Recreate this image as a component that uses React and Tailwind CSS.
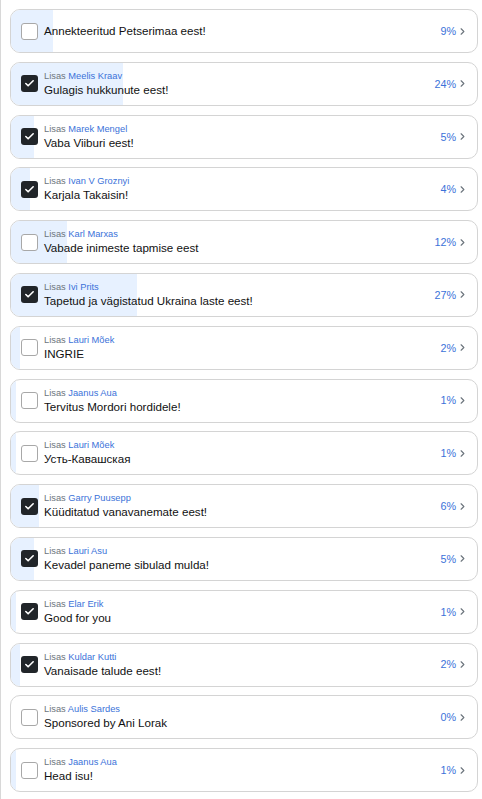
import { ChevronRight, Check } from "lucide-react";

const ITEMS = [
  { title: "Annekteeritud Petserimaa eest!", pct: 9, checked: false },
  { by: "Meelis Kraav", title: "Gulagis hukkunute eest!", pct: 24, checked: true },
  { by: "Marek Mengel", title: "Vaba Viiburi eest!", pct: 5, checked: true },
  { by: "Ivan V Groznyi", title: "Karjala Takaisin!", pct: 4, checked: true },
  { by: "Karl Marxas", title: "Vabade inimeste tapmise eest", pct: 12, checked: false },
  { by: "Ivi Prits", title: "Tapetud ja vägistatud Ukraina laste eest!", pct: 27, checked: true },
  { by: "Lauri Mõek", title: "INGRIE", pct: 2, checked: false },
  { by: "Jaanus Aua", title: "Tervitus Mordori hordidele!", pct: 1, checked: false },
  { by: "Lauri Mõek", title: "Усть-Кавашская", pct: 1, checked: false },
  { by: "Garry Puusepp", title: "Küüditatud vanavanemate eest!", pct: 6, checked: true },
  { by: "Lauri Asu", title: "Kevadel paneme sibulad mulda!", pct: 5, checked: true },
  { by: "Elar Erik", title: "Good for you", pct: 1, checked: true },
  { by: "Kuldar Kutti", title: "Vanaisade talude eest!", pct: 2, checked: true },
  { by: "Aulis Sardes", title: "Sponsored by Ani Lorak", pct: 0, checked: false },
  { by: "Jaanus Aua", title: "Head isu!", pct: 1, checked: false },
];

function Row({ item }) {
  return (
    <div className="relative h-[44px] rounded-[10px] border border-[#d4d4d4] bg-white overflow-hidden">
      {/* progress fill */}
      <div
        className="absolute inset-y-0 left-0 bg-[#e7f1ff]"
        style={{ width: `${item.pct}%` }}
      />
      <div className="relative h-full flex items-center pl-[10px] pr-[9px]">
        {item.checked ? (
          <div className="w-[17px] h-[17px] rounded-[3px] bg-[#212529] flex items-center justify-center shrink-0">
            <Check className="w-[11px] h-[11px] text-white" strokeWidth={3.5} />
          </div>
        ) : (
          <div className="w-[17px] h-[17px] rounded-[3px] border border-[#a8a8a8] bg-white shrink-0" />
        )}
        <div className="ml-[6px] flex-1 min-w-0 flex flex-col justify-center">
          {item.by && (
            <div className="text-[9.3px] leading-[12px] text-[#6c757d]">
              Lisas <span className="text-[#3b72d9]">{item.by}</span>
            </div>
          )}
          <div className="text-[11.6px] leading-[16px] text-[#111]">{item.title}</div>
        </div>
        <span className="text-[10.8px] text-[#3b72d9]">{item.pct}%</span>
        <ChevronRight className="w-[11px] h-[11px] text-[#6c757d] ml-[1px]" strokeWidth={2.5} />
      </div>
    </div>
  );
}

export default function App() {
  return (
    <div
      className="min-h-[799px] bg-white border-l border-[#d8d8d8] pt-[9px] pl-[9px] pr-[4px] pb-[6px] flex flex-col gap-[8.8px]"
      style={{ fontFamily: '"Liberation Sans", Arial, sans-serif' }}
    >
      {ITEMS.map((item, i) => (
        <Row key={i} item={item} />
      ))}
    </div>
  );
}
